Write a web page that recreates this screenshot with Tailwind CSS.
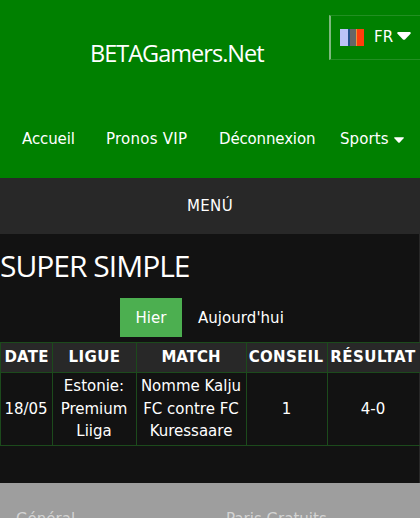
<!DOCTYPE html>
<html lang="fr">
<head>
    <meta charset="UTF-8">
    <meta name="viewport" content="width=device-width, initial-scale=1.0">
    <title>BETAGamers.Net</title>
    <script src="https://cdn.jsdelivr.net/npm/@tailwindcss/browser@4"></script>
</head>
<body class="bg-[#121212] text-white text-[15px] leading-[22.5px] font-['DejaVu_Sans',sans-serif] h-[518px] overflow-hidden">
    <header class="relative bg-[green] h-[178px] flex flex-col">
        <!-- Language selector -->
        <button class="absolute right-0 top-[15px] w-[91px] h-[45px] flex items-center border border-r-0 border-l-2 border-[#228f22] border-l-[#7fb97f] pl-[9px]">
            <svg class="w-6 h-[17px]" viewBox="0 0 24 17">
                <path fill="#bcc3f8" d="M0 0h8v17H0z"/>
                <path fill="#23518c" d="M8 0h2v17H8z"/>
                <path fill="#666" d="M10 0h6v17h-6z"/>
                <path fill="#e8963c" d="M16 0h1v17h-1z"/>
                <path fill="#ff3d0c" d="M17 0h7v17h-7z"/>
            </svg>
            <span class="ml-2.5">FR</span>
            <svg class="ml-1 mb-[3px] w-[14px] h-2" viewBox="0 0 14 8"><path fill="#fff" d="M1 0h12q1.400.6.5 1.700L8 7.400q-1 .9-2 0L.5 1.700Q-.4.600 1 0z"/></svg>
        </button>
        <h1 class="pt-[36px] pl-[90px] text-[23.5px] leading-[34px] tracking-[-0.98px] font-['Open_Sans',sans-serif]">BETAGamers.Net</h1>
        <nav class="mt-[58px] pl-[22px] flex whitespace-nowrap">
            <a class="w-[84px] tracking-[-0.1px]">Accueil</a>
            <a class="w-[113px] tracking-[0.25px]">Pronos VIP</a>
            <a class="w-[121px] tracking-[-0.15px]">Déconnexion</a>
            <a class="flex items-center tracking-[0.1px]">Sports
                <svg class="ml-[5px] mt-px w-[10px] h-[6px]" viewBox="0 0 14 8"><path fill="#fff" d="M1 0h12q1.400.6.5 1.700L8 7.400q-1 .9-2 0L.5 1.700Q-.4.600 1 0z"/></svg>
            </a>
        </nav>
    </header>

    <div class="bg-[#282828] h-[56px] pt-px flex items-center justify-center tracking-[0.4px]">MENÚ</div>

    <main class="h-[249px] border-r border-[#282828]">
        <h2 class="pt-[9px] text-[30px] leading-[45px] tracking-[-1px] font-['Open_Sans',sans-serif]">SUPER SIMPLE</h2>

        <div class="mt-[10px] pl-[120px] flex">
            <button class="bg-[#4caf50] w-[62px] h-[39px] pt-px">Hier</button>
            <button class="px-4 h-[39px] pt-px tracking-[0.05px]">Aujourd'hui</button>
        </div>

        <table class="mt-[5px] w-[420px] table-fixed border-collapse text-center">
            <colgroup>
                <col class="w-[52px]"><col class="w-[84px]"><col class="w-[110px]"><col class="w-[81px]"><col class="w-[93px]">
            </colgroup>
            <thead>
                <tr class="bg-[#282828] h-[30px] whitespace-nowrap">
                    <th class="border border-[#1c4a1c] p-0 tracking-[0.2px]">DATE</th>
                    <th class="border border-[#1c4a1c] p-0 tracking-[0.4px]">LIGUE</th>
                    <th class="border border-[#1c4a1c] p-0 pr-px">MATCH</th>
                    <th class="border border-[#1c4a1c] p-0 pr-[2px] tracking-[0.3px]">CONSEIL</th>
                    <th class="border border-[#1c4a1c] p-0 pr-[2px] tracking-[0.5px]">RÉSULTAT</th>
                </tr>
            </thead>
            <tbody>
                <tr class="h-[73px]">
                    <td class="border border-[#1c4a1c] p-0 pr-px">18/05</td>
                    <td class="border border-[#1c4a1c] p-0 pr-px">Estonie:<br>Premium<br>Liiga</td>
                    <td class="border border-[#1c4a1c] p-0 pr-px">Nomme Kalju<br>FC contre FC<br>Kuressaare</td>
                    <td class="border border-[#1c4a1c] p-0 pr-px">1</td>
                    <td class="border border-[#1c4a1c] p-0 pr-[2px]">4-0</td>
                </tr>
            </tbody>
        </table>
    </main>

    <footer class="bg-[#9e9e9e] h-[35px] pt-[25px] pl-4 flex text-[#d3d3d3] overflow-hidden">
        <div class="w-[210px]">Général</div>
        <div>Paris Gratuits</div>
    </footer>
</body>
</html>
